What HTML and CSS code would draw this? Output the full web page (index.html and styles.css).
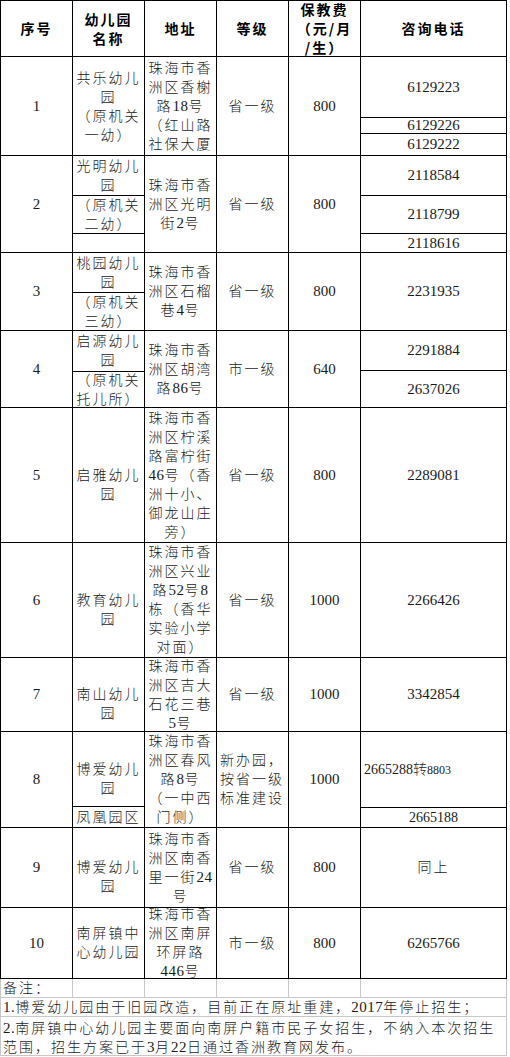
FILE: index.html
```html
<!DOCTYPE html>
<html lang="zh-CN">
<head>
<meta charset="utf-8">
<title>幼儿园招生信息</title>
<link rel="stylesheet" href="styles.css">
</head>
<body>
<div class="sheet">
  <div class="row head">
    <div class="c">序号</div>
    <div class="c">幼儿园<br>名称</div>
    <div class="c">地址</div>
    <div class="c">等级</div>
    <div class="c">保教费<br>（元/月<br>/生）</div>
    <div class="c">咨询电话</div>
  </div>

  <div class="row r1">
    <div class="c num">1</div>
    <div class="c down2">共乐幼儿<br>园<br>（原机关<br>一幼）</div>
    <div class="c"><div>珠海市香<br>洲区香榭<br>路<span class="d">18</span>号<br>（红山路<br>社保大厦</div></div>
    <div class="c">省一级</div>
    <div class="c num">800</div>
    <div class="c stack">
      <div class="sub num h61">6129223</div>
      <div class="sub num h16">6129226</div>
      <div class="sub num last">6129222</div>
    </div>
  </div>

  <div class="row r2">
    <div class="c num">2</div>
    <div class="c stack">
      <div class="sub h40">光明幼儿<br>园</div>
      <div class="sub h38">（原机关<br>二幼）</div>
      <div class="sub last"></div>
    </div>
    <div class="c"><div>珠海市香<br>洲区光明<br>街<span class="d">2</span>号</div></div>
    <div class="c">省一级</div>
    <div class="c num">800</div>
    <div class="c stack">
      <div class="sub num h40">2118584</div>
      <div class="sub num h38">2118799</div>
      <div class="sub num last">2118616</div>
    </div>
  </div>

  <div class="row r3">
    <div class="c num">3</div>
    <div class="c stack">
      <div class="sub h40">桃园幼儿<br>园</div>
      <div class="sub last">（原机关<br>三幼）</div>
    </div>
    <div class="c"><div>珠海市香<br>洲区石榴<br>巷<span class="d">4</span>号</div></div>
    <div class="c">省一级</div>
    <div class="c num">800</div>
    <div class="c num">2231935</div>
  </div>

  <div class="row r4">
    <div class="c num">4</div>
    <div class="c stack">
      <div class="sub h41">启源幼儿<br>园</div>
      <div class="sub last">（原机关<br>托儿所）</div>
    </div>
    <div class="c"><div>珠海市香<br>洲区胡湾<br>路<span class="d">86</span>号</div></div>
    <div class="c">市一级</div>
    <div class="c num">640</div>
    <div class="c stack">
      <div class="sub num h40">2291884</div>
      <div class="sub num last">2637026</div>
    </div>
  </div>

  <div class="row r5">
    <div class="c num">5</div>
    <div class="c shift">启雅幼儿<br>园</div>
    <div class="c"><div>珠海市香<br>洲区柠溪<br>路富柠街<br><span class="d">46</span>号（香<br>洲十小、<br>御龙山庄<br>旁）</div></div>
    <div class="c">省一级</div>
    <div class="c num">800</div>
    <div class="c num">2289081</div>
  </div>

  <div class="row r6">
    <div class="c num">6</div>
    <div class="c shift">教育幼儿<br>园</div>
    <div class="c"><div>珠海市香<br>洲区兴业<br>路<span class="d">52</span>号<span class="d">8</span><br>栋（香华<br>实验小学<br>对面）</div></div>
    <div class="c">省一级</div>
    <div class="c num">1000</div>
    <div class="c num">2266426</div>
  </div>

  <div class="row r7">
    <div class="c num">7</div>
    <div class="c shift">南山幼儿<br>园</div>
    <div class="c"><div>珠海市香<br>洲区吉大<br>石花三巷<br><span class="d">5</span>号</div></div>
    <div class="c">省一级</div>
    <div class="c num">1000</div>
    <div class="c num">3342854</div>
  </div>

  <div class="row r8">
    <div class="c num">8</div>
    <div class="c stack">
      <div class="sub h75 shift">博爱幼儿<br>园</div>
      <div class="sub last">凤凰园区</div>
    </div>
    <div class="c"><div>珠海市香<br>洲区春风<br>路<span class="d">8</span>号<br>（一中西<br>门侧）</div></div>
    <div class="c left">新办园，<br>按省一级<br>标准建设</div>
    <div class="c num">1000</div>
    <div class="c stack">
      <div class="sub h76 left small"><div>2665288转<span class="tiny">8803</span></div></div>
      <div class="sub last small">2665188</div>
    </div>
  </div>

  <div class="row r9">
    <div class="c num">9</div>
    <div class="c shift">博爱幼儿<br>园</div>
    <div class="c"><div>珠海市香<br>洲区南香<br>里一街<span class="d">24</span><br>号</div></div>
    <div class="c">省一级</div>
    <div class="c num">800</div>
    <div class="c">同上</div>
  </div>

  <div class="row r10">
    <div class="c num">10</div>
    <div class="c">南屏镇中<br>心幼儿园</div>
    <div class="c"><div>珠海市香<br>洲区南屏<br>环屏路<br><span class="d">446</span>号</div></div>
    <div class="c">市一级</div>
    <div class="c num">800</div>
    <div class="c num">6265766</div>
  </div>
</div>

<div class="notes">
  <div class="nrow grid">
    <div class="g">备注：</div>
    <div class="g"></div>
    <div class="g"></div>
    <div class="g"></div>
    <div class="g"></div>
    <div class="g"></div>
  </div>
  <div class="nrow n1"><span class="d">1.</span>博爱幼儿园由于旧园改造，目前正在原址重建，<span class="d">2017</span>年停止招生；</div>
  <div class="nrow n2"><span class="d">2.</span>南屏镇中心幼儿园主要面向南屏户籍市民子女招生，不纳入本次招生<br>范围，招生方案已于<span class="d">3</span>月<span class="d">22</span>日通过香洲教育网发布。</div>
</div>
</body>
</html>
```

FILE: styles.css
```css
html, body {
  margin: 0;
  padding: 0;
  background: #fff;
}

body {
  font-family: "Liberation Serif", "Noto Sans CJK SC", serif;
  font-size: 14px;
  font-weight: 300;
  line-height: 19px;
  color: #1a1a1a;
  letter-spacing: 2px;
}

.d {
  font-size: 15px;
  letter-spacing: 0.5px;
}

.sheet {
  width: 507px;
  box-sizing: border-box;
  border-left: 1px solid #000;
  border-top: 1px solid #000;
}

.row {
  display: grid;
  grid-template-columns: 72px 72px 72px 72px 72px 146px;
}

.c {
  box-sizing: border-box;
  border-right: 1px solid #000;
  border-bottom: 1px solid #000;
  display: flex;
  align-items: center;
  justify-content: center;
  text-align: center;
  white-space: nowrap;
  min-height: 0;
}

.head { height: 56px; }
.head .c {
  font-family: "Noto Sans CJK SC", sans-serif;
  font-weight: 700;
  font-size: 14px;
  color: #000;
}

.r1 { height: 99px; }
.r2 { height: 97px; }
.r3 { height: 78px; }
.r4 { height: 77px; }
.r5 { height: 135px; }
.r6 { height: 115px; }
.r7 { height: 74px; }
.r8 { height: 96px; }
.r9 { height: 80px; }
.r10 { height: 71px; }

.num {
  font-size: 15px;
  letter-spacing: 0;
}

.stack {
  flex-direction: column;
  align-items: stretch;
  justify-content: flex-start;
}

.sub {
  box-sizing: border-box;
  border-bottom: 1px solid #000;
  display: flex;
  align-items: center;
  justify-content: center;
  text-align: center;
  flex: none;
}
.sub.last {
  border-bottom: none;
  flex: 1;
  min-height: 0;
}

.h16 { height: 16px; }
.h38 { height: 38px; }
.h40 { height: 40px; }
.h41 { height: 41px; }
.h61 { height: 61px; }
.h75 { height: 75px; }
.h76 { height: 76px; }

.shift { padding-top: 19px; }
.down2 { padding-top: 2px; }

.left {
  justify-content: flex-start;
  text-align: left;
  padding-left: 3px;
}

.small {
  font-size: 14px;
  letter-spacing: 0;
}
.tiny {
  font-size: 12px;
}

.notes {
  width: 507px;
  box-sizing: border-box;
  border-left: 1px solid #c8c8c8;
}

.nrow {
  box-sizing: border-box;
  border-right: 1px solid #c8c8c8;
  border-bottom: 1px solid #c8c8c8;
  padding-left: 2px;
}

.grid {
  display: grid;
  grid-template-columns: 72px 72px 72px 72px 72px 146px;
  height: 19px;
  padding-left: 0;
  border-right: none;
}
.g {
  box-sizing: border-box;
  border-right: 1px solid #c8c8c8;
  padding-left: 2px;
}

.n1 { height: 19px; }
.n2 {
  height: 39px;
  padding-top: 2px;
  white-space: nowrap;
}
```
